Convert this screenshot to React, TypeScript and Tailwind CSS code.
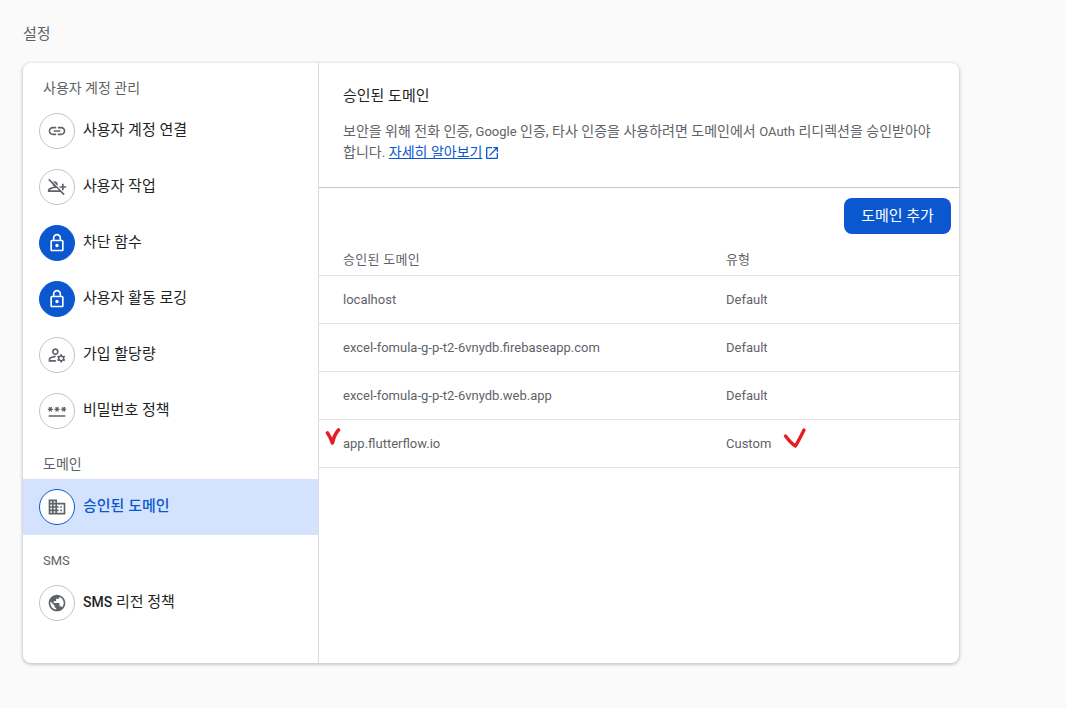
const paths = {
  link: 'M3.9 12c0-1.71 1.39-3.1 3.1-3.1h4V7H7c-2.76 0-5 2.24-5 5s2.24 5 5 5h4v-1.9H7c-1.71 0-3.1-1.39-3.1-3.1zM8 13h8v-2H8v2zm9-6h-4v1.9h4c1.71 0 3.1 1.39 3.1 3.1s-1.39 3.1-3.1 3.1h-4V17h4c2.76 0 5-2.24 5-5s-2.24-5-5-5z',
  personOff: 'M1.4 3.4 2.8 2l18.4 18.4-1.4 1.4-3.8-3.8H1v-2c0-2.6 4.4-4.1 7.600-4.400L6.900 9.900c-.1-.3-.1-.6-.1-.9L1.400 3.400zM3.200 16h11.100l-2.800-2.800c-3.700-.1-7.400 1.200-8.300 2.800zM9 5c2.200 0 4 1.800 4 4 0 .6-.1 1.100-.4 1.600L7.400 5.400C7.900 5.100 8.400 5 9 5zM18 8h2v3h3v2h-3v3h-2v-3h-3v-2h3V8z',
  lock: 'M18 8h-1V6c0-2.76-2.24-5-5-5S7 3.24 7 6v2H6c-1.1 0-2 .9-2 2v10c0 1.1.9 2 2 2h12c1.1 0 2-.9 2-2V10c0-1.1-.9-2-2-2zM9 6c0-1.66 1.34-3 3-3s3 1.34 3 3v2H9V6zm9 14H6V10h12v10zm-6-3c1.1 0 2-.9 2-2s-.9-2-2-2-2 .9-2 2 .9 2 2 2z',
  manage: 'M4 18v-.65c0-.34.16-.66.41-.81C6.1 15.53 8.03 15 10 15c.03 0 .05 0 .08.01.1-.7.3-1.37.59-1.98-.22-.02-.44-.03-.67-.03-2.42 0-4.68.67-6.61 1.82-.88.52-1.39 1.5-1.39 2.53V20h9.26c-.42-.6-.75-1.28-.97-2H4zm6-6c2.21 0 4-1.79 4-4s-1.79-4-4-4-4 1.79-4 4 1.79 4 4 4zm0-6c1.1 0 2 .9 2 2s-.9 2-2 2-2-.9-2-2 .9-2 2-2zm10.75 10c0-.22-.03-.42-.06-.63l1.14-1.01-1-1.73-1.45.49c-.32-.27-.68-.48-1.08-.63L18 11h-2l-.3 1.49c-.4.15-.76.36-1.08.63l-1.45-.49-1 1.73 1.14 1.01c-.03.21-.06.41-.06.63s.03.42.06.63l-1.14 1.01 1 1.73 1.45-.49c.32.27.68.48 1.08.63L16 21h2l.3-1.49c.4-.15.76-.36 1.08-.63l1.45.49 1-1.73-1.14-1.01c.03-.21.06-.41.06-.63zM17 18c-1.1 0-2-.9-2-2s.9-2 2-2 2 .9 2 2-.9 2-2 2z',
  password: 'M2 17h20v2H2v-2zm1.15-4.05L4 11.47l.85 1.48 1.3-.75-.85-1.48H7v-1.5H5.3l.85-1.47L4.85 7 4 8.47 3.15 7l-1.3.75.85 1.47H1v1.5h1.7l-.85 1.48 1.3.75zm6.7-.75 1.3.75.85-1.48.85 1.48 1.3-.75-.85-1.48H15v-1.5h-1.7l.85-1.47-1.3-.75L12 8.47 11.15 7l-1.3.75.85 1.47H9v1.5h1.7l-.85 1.48zM23 9.22h-1.7l.85-1.47-1.3-.75L20 8.47 19.15 7l-1.3.75.85 1.47H17v1.5h1.7l-.85 1.48 1.3.75.85-1.48.85 1.48 1.3-.75-.85-1.48H23v-1.5z',
  domain: 'M12 7V3H2v18h20V7H12zM6 19H4v-2h2v2zm0-4H4v-2h2v2zm0-4H4V9h2v2zm0-4H4V5h2v2zm4 12H8v-2h2v2zm0-4H8v-2h2v2zm0-4H8V9h2v2zm0-4H8V5h2v2zm10 12h-8v-2h2v-2h-2v-2h2v-2h-2V9h8v10zm-2-8h-2v2h2v-2zm0 4h-2v2h2v-2z',
  globe: 'M12 2C6.48 2 2 6.48 2 12s4.48 10 10 10 10-4.48 10-10S17.52 2 12 2zm-1 17.93c-3.95-.49-7-3.85-7-7.93 0-.62.08-1.21.21-1.79L9 15v1c0 1.1.9 2 2 2v1.93zm6.9-2.54c-.26-.81-1-1.39-1.9-1.39h-1v-3c0-.55-.45-1-1-1H8v-2h2c.55 0 1-.45 1-1V7h2c1.1 0 2-.9 2-2v-.41c2.93 1.19 5 4.06 5 7.41 0 2.08-.8 3.97-2.1 5.39z',
  external: 'M19 19H5V5h7V3H5c-1.11 0-2 .9-2 2v14c0 1.1.89 2 2 2h14c1.1 0 2-.9 2-2v-7h-2v7zM14 3v2h3.59l-9.83 9.83 1.41 1.41L19 6.41V10h2V3h-7z',
};

function Icon({ d, className }: { d: string; className?: string }) {
  return (
    <svg viewBox="0 0 24 24" className={className} fill="currentColor">
      <path d={d} />
    </svg>
  );
}

function NavItem({ icon, children, variant }: { icon: string; children: React.ReactNode; variant?: 'locked' | 'active' }) {
  const active = variant === 'active';
  const locked = variant === 'locked';
  return (
    <div className={`flex h-14 items-center pl-4 ${active ? 'bg-[#d3e3fd]' : ''}`}>
      <div
        className={`flex h-9 w-9 shrink-0 items-center justify-center rounded-full border ${
          locked
            ? 'border-[#0b57d0] bg-[#0b57d0] text-white'
            : active
              ? 'border-[#0b57d0] bg-white text-[#5f6368]'
              : 'border-[#bdc3cf] bg-white text-[#5f6368]'
        }`}
      >
        <Icon d={icon} className="h-5 w-5" />
      </div>
      <span className={`ml-2 pb-[2px] text-[15px] ${active ? 'font-medium text-[#0b57d0]' : 'text-[#1f1f1f]'}`}>{children}</span>
    </div>
  );
}

function SectionLabel({ children, className }: { children: string; className?: string }) {
  return <div className={`flex h-[26px] items-center pl-5 text-[#5f6368] ${className ?? ''}`}>{children}</div>;
}

const domains = [
  ['localhost', 'Default'],
  ['excel-fomula-g-p-t2-6vnydb.firebaseapp.com', 'Default'],
  ['excel-fomula-g-p-t2-6vnydb.web.app', 'Default'],
  ['app.flutterflow.io', 'Custom'],
];

export default function App() {
  return (
    <div className="min-h-[708px] bg-[#fafafa] pl-[23px] font-['Roboto','Noto_Sans_CJK_KR',sans-serif]">
      <div className="flex h-[63px] items-start pt-6">
        <span className="text-[15px] leading-5 text-[#5f6368]">설정</span>
      </div>
      <div className="flex h-[600px] w-[936px] overflow-hidden rounded-lg bg-white shadow-[0_1px_3px_1px_rgba(60,64,67,0.25)]">
        <aside className="w-[296px] shrink-0 border-r border-[#dadce0] pt-3">
          <SectionLabel className="mb-[2px] text-sm">사용자 계정 관리</SectionLabel>
          <NavItem icon={paths.link}>사용자 계정 연결</NavItem>
          <NavItem icon={paths.personOff}>사용자 작업</NavItem>
          <NavItem icon={paths.lock} variant="locked">차단 함수</NavItem>
          <NavItem icon={paths.lock} variant="locked">사용자 활동 로깅</NavItem>
          <NavItem icon={paths.manage}>가입 할당량</NavItem>
          <NavItem icon={paths.password}>비밀번호 정책</NavItem>
          <SectionLabel className="mt-3 mb-[2px] text-sm">도메인</SectionLabel>
          <NavItem icon={paths.domain} variant="active">승인된 도메인</NavItem>
          <SectionLabel className="mt-[13px] mb-[1px] text-[13px]">SMS</SectionLabel>
          <NavItem icon={paths.globe}>
            <span className="text-sm font-medium">SMS</span> 리전 정책
          </NavItem>
        </aside>
        <main className="relative min-w-0 flex-1">
          <div className="h-[125px] border-b border-[#c7c7c7] px-6 pt-[23px]">
            <h2 className="text-[15px] leading-5 text-[#1f1f1f]">승인된 도메인</h2>
            <p className="mt-[15px] text-sm leading-[21px] text-[#5f6368]">
              보안을 위해 전화 인증, <span className="text-[13px]">Google</span> 인증, 타사 인증을 사용하려면 도메인에서{' '}
              <span className="text-[13px]">OAuth</span> 리디렉션을 승인받아야 합니다.{' '}
              <a className="text-[#0b57d0] underline">자세히 알아보기</a>
              <Icon d={paths.external} className="ml-[2px] inline h-4 w-4 text-[#0b57d0]" />
            </p>
          </div>
          <div className="flex justify-end pt-[10px] pr-2">
            <button className="h-9 w-[107px] rounded-lg bg-[#0b57d0] text-[15px] text-white">도메인 추가</button>
          </div>
          <div className="mt-[11px] flex h-[31px] border-b border-[#e3e3e3] pt-[5px] pl-6 text-[13px] leading-5 text-[#5f6368]">
            <span className="w-[383px] tracking-[0.3px]">승인된 도메인</span>
            <span>유형</span>
          </div>
          {domains.map(([name, type]) => (
            <div key={name} className="flex h-12 items-center border-b border-[#e3e3e3] pl-6 text-[13px] text-[#5f6368]">
              <span className="w-[383px]">{name}</span>
              <span>{type}</span>
            </div>
          ))}
          <svg viewBox="0 0 16 19" className="absolute top-[364px] left-[6px] h-[19px] w-4" fill="none">
            <path d="M2.500 6 C4 8 6 12 7.500 16 C8.500 11 10.500 6 13.500 3" stroke="#e31e24" strokeWidth="3.600" strokeLinecap="round" strokeLinejoin="round" />
          </svg>
          <svg viewBox="0 0 24 22" className="absolute top-[364px] left-[464px] h-[22px] w-6" fill="none">
            <path d="M2.500 9 C5.500 13 9 17 12.500 19 C15.500 14 18.500 8 21 3" stroke="#e31e24" strokeWidth="3.400" strokeLinecap="round" strokeLinejoin="round" />
          </svg>
        </main>
      </div>
    </div>
  );
}
